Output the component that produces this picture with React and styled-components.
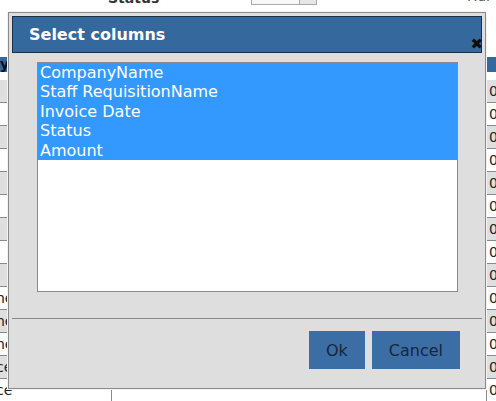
import React from "react";
import styled, { createGlobalStyle } from "styled-components";

const GlobalStyle = createGlobalStyle`
  html, body {
    margin: 0;
    padding: 0;
    background: #ffffff;
    overflow: hidden;
  }
  body {
    font-family: "DejaVu Sans", Verdana, sans-serif;
  }
`;

const Page = styled.div`
  position: relative;
  width: 496px;
  height: 401px;
  overflow: hidden;
  background: #ffffff;
`;

/* filter strip above the grid, scrolled mostly out of view */
const FilterBar = styled.div`
  height: 5px;
  display: flex;
  align-items: flex-end;
  overflow: hidden;
  padding-left: 108px;
`;

const FilterLabel = styled.span`
  font-size: 14px;
  font-weight: bold;
  color: #333;
  line-height: 14px;
  width: 143px;
  flex: none;
`;

const FilterInput = styled.div`
  display: flex;
  width: 66px;
  height: 20px;
  box-sizing: border-box;
  border: 1px solid #a9a9a9;
  background: #f7f7f7;
  flex: none;
`;

const FilterButton = styled.div`
  margin-left: auto;
  width: 16px;
  border-left: 1px solid #a9a9a9;
  background: #e6e6e6;
`;

const FilterHint = styled.span`
  margin-left: 150px;
  font-size: 14px;
  line-height: 17px;
  color: #555;
  white-space: nowrap;
`;

const Grid = styled.div`
  margin-top: 52px;
  display: grid;
  grid-template-columns: 112px 375px 40px;
  grid-auto-rows: 23px;
  font-size: 14px;
  color: #222;
  & > div:first-child,
  & > div:nth-child(2),
  & > div:nth-child(3) {
    height: 15px;
  }
`;

const HeadCell = styled.div`
  background: #35689c;
  color: #111;
  font-weight: bold;
  font-size: 14px;
  line-height: 15px;
  border-right: 1px solid #7f7f7f;
  overflow: hidden;
  white-space: nowrap;
  padding-left: ${(p) => p.$pad || 0}px;
  align-self: start;
`;

const Cell = styled.div`
  box-sizing: border-box;
  background: ${(p) => (p.$alt ? "#dfdfdf" : "#ffffff")};
  border-bottom: 1px solid #8a8a8a;
  border-right: 1px solid #8a8a8a;
  line-height: 22px;
  overflow: hidden;
  white-space: nowrap;
  padding-left: ${(p) => p.$pad || 0}px;
  text-indent: ${(p) => p.$indent || 0}px;
`;

/* modal column picker */
const Dialog = styled.div`
  position: absolute;
  left: 8px;
  top: 12px;
  width: 478px;
  height: 377px;
  box-sizing: border-box;
  border: 1px solid #8a8a8a;
  background: #dedede;
  padding: 3px;
  display: flex;
  flex-direction: column;
  box-shadow: 0 0 0 1px #f4f4f4;
`;

const TitleBar = styled.div`
  position: relative;
  height: 37px;
  box-sizing: border-box;
  border: 1px solid #1d2f44;
  background: #35689c;
  color: #ffffff;
  font-weight: bold;
  font-size: 16px;
  display: flex;
  align-items: center;
  padding-left: 16px;
`;

const CloseGlyph = styled.span`
  position: absolute;
  right: -2px;
  bottom: 3px;
  color: #0d0d0d;
  font-size: 15px;
  font-weight: bold;
  line-height: 10px;
  cursor: pointer;
`;

const Body = styled.div`
  padding: 9px 24px 0 25px;
`;

const ListBox = styled.div`
  height: 230px;
  box-sizing: border-box;
  border: 1px solid #8a8a8a;
  background: #ffffff;
  overflow: hidden;
`;

const Option = styled.div`
  height: 19.4px;
  line-height: 20px;
  padding-left: 2px;
  font-size: 16px;
  white-space: nowrap;
  background: ${(p) => (p.$selected ? "#3399ff" : "transparent")};
  color: ${(p) => (p.$selected ? "#ffffff" : "#000000")};
`;

const Separator = styled.hr`
  margin: 26px 0 0 0;
  border: none;
  border-top: 1px solid #8a8a8a;
  height: 0;
`;

const Footer = styled.div`
  display: flex;
  justify-content: flex-end;
  gap: 7px;
  padding: 12px 22px 0 0;
`;

const Button = styled.button`
  height: 38px;
  padding: 0 17px;
  border: none;
  background: #3a6ea5;
  color: #16263a;
  font-family: "DejaVu Sans", Verdana, sans-serif;
  font-size: 16px;
  cursor: pointer;
`;

const columns = [
  "CompanyName",
  "Staff RequisitionName",
  "Invoice Date",
  "Status",
  "Amount",
];

const leftTexts = ["", "", "", "", "", "", "", "", "", "ne", "ne", "ne", "ce", "ce", ""];

export default function App() {
  return (
    <>
      <GlobalStyle />
      <Page>
        <FilterBar>
          <FilterLabel>Status</FilterLabel>
          <FilterInput>
            <FilterButton />
          </FilterInput>
          <FilterHint>Hal</FilterHint>
        </FilterBar>
        <Grid>
          <HeadCell>y</HeadCell>
          <HeadCell $pad={6} />
          <HeadCell $pad={2} />
          {leftTexts.map((t, i) => (
            <React.Fragment key={i}>
              <Cell $alt={i % 2 === 0} $indent={-4}>
                {t}
              </Cell>
              <Cell $alt={i % 2 === 0} $pad={28}>
                {i === 14 ? "Submitted" : ""}
              </Cell>
              <Cell $alt={i % 2 === 0} $pad={2}>
                0
              </Cell>
            </React.Fragment>
          ))}
        </Grid>
        <Dialog>
          <TitleBar>
            Select columns
            <CloseGlyph>✖</CloseGlyph>
          </TitleBar>
          <Body>
            <ListBox>
              {columns.map((c) => (
                <Option key={c} $selected>
                  {c}
                </Option>
              ))}
            </ListBox>
          </Body>
          <Separator />
          <Footer>
            <Button>Ok</Button>
            <Button>Cancel</Button>
          </Footer>
        </Dialog>
      </Page>
    </>
  );
}
